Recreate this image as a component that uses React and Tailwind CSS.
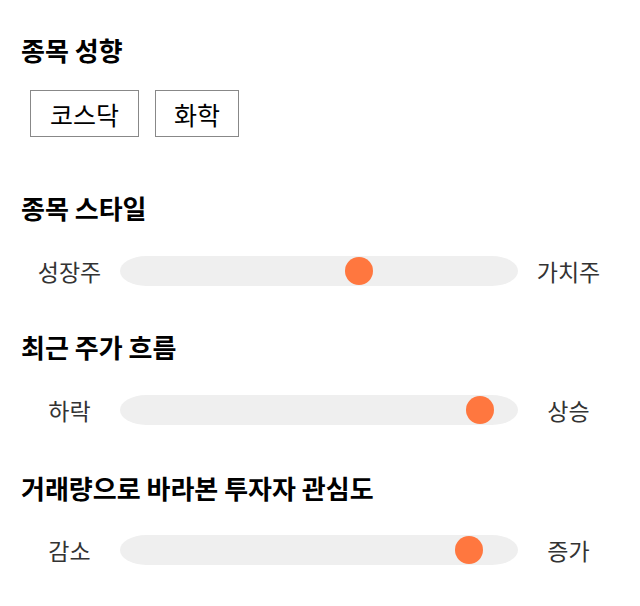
import React from "react";

const font = { fontFamily: '"Noto Sans CJK KR", "Noto Sans", sans-serif' };

function Slider({ left, right, pos, className }) {
  return (
    <div className={"flex items-center " + className}>
      <div className="w-[101px] text-center text-[23px] text-[#333] leading-[30px]">{left}</div>
      <div className="relative h-[30px] w-[398px] rounded-[26px/15px] bg-[#efefef]">
        <div
          className="absolute top-[1px] h-[28px] w-[28px] -translate-x-1/2 rounded-full bg-[#ff773f]"
          style={{ left: pos + "px" }}
        />
      </div>
      <div className="w-[101px] text-center text-[23px] text-[#333] leading-[30px]">{right}</div>
    </div>
  );
}

export default function App() {
  return (
    <div className="w-[640px] h-[606px] bg-white px-[20px] pt-[35px] flex flex-col" style={font}>
      <h2 className="pl-[1px] h-[30px] leading-[30px] text-[26px] font-bold text-black">종목 성향</h2>
      <div className="mt-[25px] ml-[10px] flex gap-[16px]">
        <div className="h-[47px] border border-[#888] px-[19px] pt-[2px] flex items-center text-[25px] text-black">코스닥</div>
        <div className="h-[47px] border border-[#888] px-[18px] pt-[2px] flex items-center text-[25px] text-black">화학</div>
      </div>
      <h2 className="mt-[56px] pl-[1px] h-[30px] leading-[30px] text-[26px] font-bold text-black">종목 스타일</h2>
      <Slider className="mt-[33px] -ml-[1px]" left="성장주" right="가치주" pos={238.5} />
      <h2 className="mt-[46px] pl-[1px] h-[30px] leading-[30px] text-[26px] font-bold text-black">최근 주가 흐름</h2>
      <Slider className="mt-[33px] -ml-[1px]" left="하락" right="상승" pos={359.5} />
      <h2 className="mt-[48px] pl-[1px] h-[30px] leading-[30px] text-[26px] font-bold text-black">거래량으로 바라본 투자자 관심도</h2>
      <Slider className="mt-[32px] -ml-[1px]" left="감소" right="증가" pos={349} />
    </div>
  );
}
